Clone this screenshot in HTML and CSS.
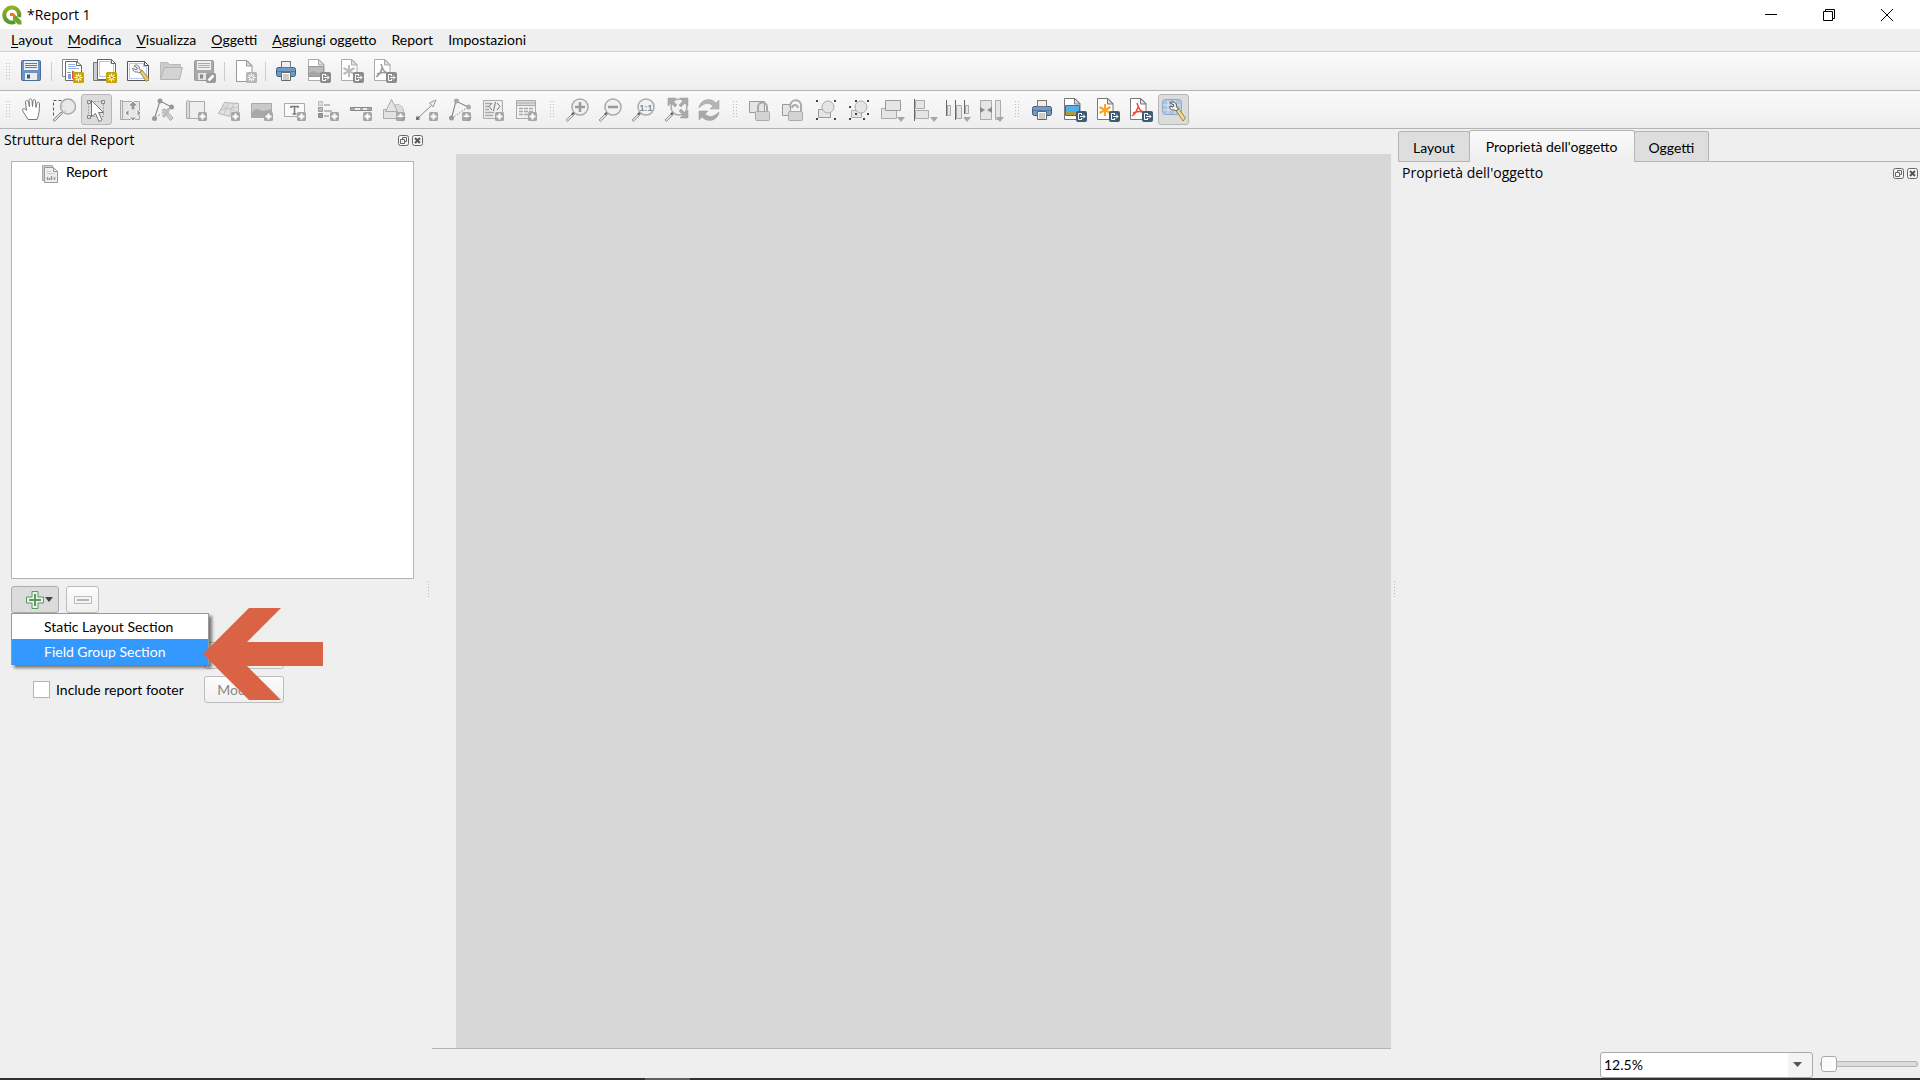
FILE: index.html
```html
<!DOCTYPE html>
<html lang="it">

<head>
    <meta charset="UTF-8">
    <meta name="viewport" content="width=device-width, initial-scale=1.0">
    <title>*Report 1</title>
    <link rel="stylesheet" href="styles.css">
</head>

<body>
    <!-- shared icon parts -->
    <svg class="sprite" aria-hidden="true">
        <defs>
            <linearGradient id="qg" x1="0" y1="0" x2="0" y2="1">
                <stop offset="0" stop-color="#93b023" />
                <stop offset="1" stop-color="#589632" />
            </linearGradient>
            <symbol id="b-new" viewBox="0 0 11 11">
                <rect width="11" height="11" rx="1.5" fill="#c8a300" />
                <path d="M5.5 1.5v8M1.5 5.5h8M2.7 2.7l5.6 5.6M8.3 2.7L2.7 8.3" stroke="#fff" stroke-width="1.2" />
                <circle cx="5.5" cy="5.5" r="1.3" fill="#c8a300" />
            </symbol>
            <symbol id="b-newgrey" viewBox="0 0 11 11">
                <rect width="11" height="11" rx="1.5" fill="#b4b4b4" />
                <path d="M5.5 1.5v8M1.5 5.5h8M2.7 2.7l5.6 5.6M8.3 2.7L2.7 8.3" stroke="#fff" stroke-width="1.2" />
                <circle cx="5.5" cy="5.5" r="1.3" fill="#b4b4b4" />
            </symbol>
            <symbol id="b-plus" viewBox="0 0 9 9">
                <rect width="9" height="9" rx="1.5" fill="#a6a6a6" />
                <path d="M4.5 1.5v6M1.5 4.5h6" stroke="#fff" stroke-width="2" />
            </symbol>
            <symbol id="b-export" viewBox="0 0 11 11">
                <rect width="11" height="11" rx="2" fill="currentColor" />
                <path d="M5 2.5H2.5v6H5M4 5.5h5M7 3.5l2 2-2 2M5.5 2v2M5.5 7v2" fill="none" stroke="#fff" />
            </symbol>
            <symbol id="lens" viewBox="0 0 24 24">
                <path d="M8 15l-7 7 1.5 1.5 7-7z" fill="#ddd" stroke="#999" />
                <path d="M7 16.500l2.500-2.500" stroke="#555" stroke-width="2" />
                <circle cx="15" cy="9" r="8" fill="#f2f2f2" stroke="#aaa" stroke-width="1.500" />
            </symbol>
            <symbol id="page" viewBox="0 0 24 24">
                <path d="M1.500.500H12l5 5v16H1.500z" fill="#fff" stroke="currentColor" />
                <path d="M11.500.500v5.500H17z" fill="#ddd" stroke="currentColor" />
            </symbol>
            <symbol id="printer" viewBox="0 0 24 24">
                <rect x="2.500" y="8.500" width="19" height="9" rx="2" fill="#6f9bcb" stroke="#415a75" />
                <path d="M3 12.500h18" stroke="#4c77a7" />
                <rect x="7.500" y="2.500" width="9" height="6" fill="#eee" stroke="#777" />
                <path d="M7.500 13.500h9v8h-9z" fill="#fff" stroke="#666" />
                <path d="M9 16h6M9 18h6M9 20h6" stroke="#999" />
            </symbol>
            <symbol id="float" viewBox="0 0 11 11">
                <rect x=".5" y=".5" width="10" height="10" rx="2" fill="#f7f7f7" stroke="#666" />
                <path d="M4.500 5V2.500h4v4H6.500M2.500 4.500h4v4h-4z" fill="none" stroke="#666" />
            </symbol>
            <symbol id="close" viewBox="0 0 11 11">
                <rect x=".5" y=".5" width="10" height="10" rx="2" fill="#f7f7f7" stroke="#666" />
                <path d="M3 3l5 5M8 3L3 8" stroke="#555" stroke-width="2" />
            </symbol>
            <symbol id="down" viewBox="0 0 8 5">
                <path d="M0 0h8L4 5z" fill="#a6a6a6" />
            </symbol>
        </defs>
    </svg>

    <header class="titlebar">
        <svg class="logo" viewBox="0 0 20 20">
            <path d="M10 2.500a7.500 7.500 0 1 0 3 14.300" fill="none" stroke="url(#qg)" stroke-width="4" />
            <path d="M10 2.500a7.500 7.500 0 0 1 7 9.500" fill="none" stroke="url(#qg)" stroke-width="4" />
            <path d="M11 11h3.500l5 5v3.500H16l-5-5z" fill="#6fa52c" />
            <path d="M8 8h3.500l2.500 2.500-1.500 1.500-1.500-1H8z" fill="#ee7913" />
        </svg>
        <h1>*Report 1</h1>
        <div class="window-buttons">
            <button type="button" aria-label="Riduci a icona"><svg viewBox="0 0 12 12"><path d="M0 5.500h12" stroke="#000" /></svg></button>
            <button type="button" aria-label="Ripristina"><svg viewBox="0 0 12 12"><path d="M.5 2.500h9v9h-9zM2.500 2.500v-2h9v9h-2" fill="none" stroke="#000" /></svg></button>
            <button type="button" aria-label="Chiudi"><svg viewBox="0 0 12 12"><path d="M0 0l12 12M12 0L0 12" stroke="#000" /></svg></button>
        </div>
    </header>

    <nav class="menubar">
        <button type="button"><u>L</u>ayout</button>
        <button type="button"><u>M</u>odifica</button>
        <button type="button"><u>V</u>isualizza</button>
        <button type="button"><u>O</u>ggetti</button>
        <button type="button"><u>A</u>ggiungi oggetto</button>
        <button type="button">Report</button>
        <button type="button">Impostazioni</button>
    </nav>

    <div class="toolbar" role="toolbar" aria-label="Report">
        <span class="grip"></span>
        <button type="button" aria-label="Salva progetto"><svg viewBox="0 0 24 24">
            <rect x="2.500" y="1.500" width="19" height="20" rx="1" fill="#6a94c4" stroke="#4c6c92" />
            <rect x="5" y="2" width="14" height="9" fill="#eee" /><path d="M6 4.500h12M6 6.500h12M6 8.500h12" stroke="#777" />
            <path d="M6 14h12v7H6z" fill="#ececec" /><path d="M8 15.500h3v4H8z" fill="#3d5878" /></svg></button>
        <span class="separator"></span>
        <button type="button" aria-label="Nuovo report"><svg viewBox="0 0 24 24">
            <path d="M2.500.500h15v17h-15z" fill="#fff" stroke="#888" />
            <path d="M5.500 2.500h11l5 4v15h-16z" fill="#fff" stroke="#666" /><path d="M16.500 2.500v4h5" fill="none" stroke="#666" />
            <path d="M8 5.500h7M8 7.500h8M8 9.500h11" stroke="#9bb2dd" />
            <path d="M8 15h3v5H8z" fill="#7da0d8" /><path d="M12 12h2v8h-2z" fill="#d9534f" /><path d="M7 13.500h4" stroke="#999" />
            <use href="#b-new" x="13" y="13" width="11" height="11" /></svg></button>
        <button type="button" aria-label="Duplica report"><svg viewBox="0 0 24 24">
            <path d="M.5 3.500h16v18H.5z" fill="#ccc" stroke="#777" />
            <path d="M4.500.500h14l4 4v16h-18z" fill="#fff" stroke="#666" /><path d="M6.500 2.500h11v2h3v13h-14z" fill="none" stroke="#b7c7f1" />
            <path d="M18.500.500v4h4" fill="none" stroke="#666" />
            <use href="#b-new" x="13" y="13" width="11" height="11" /></svg></button>
        <button type="button" aria-label="Gestione layout"><svg viewBox="0 0 24 24">
            <path d="M1.500 2.500h17l4 4v15h-21z" fill="#fff" stroke="#555" /><path d="M3.500 4.500h14v3h3v12h-17z" fill="none" stroke="#b7c7f1" />
            <path d="M18.500 2.500v4h4" fill="none" stroke="#555" />
            <path d="M13 12l3-1 7 9-2.500 2.500z" fill="#e6cf72" stroke="#a28b35" />
            <path d="M8 7c2-2 5-1 5.500 2 0 1 .5 2 2 3l-2.500 2c-1-1-2-1-3-1-2 0-4-2-3-4l3 2 1.500-2z" fill="#eee" stroke="#777" /></svg></button>
        <button type="button" aria-label="Aggiungi elementi da modello" disabled><svg viewBox="0 0 24 24">
            <path d="M1.500 19.500v-16h7l2 2h11v3" fill="#ccc" stroke="#bbb" />
            <path d="M5.500 8.500h18l-3 12h-19z" fill="#d3d3d3" stroke="#b5b5b5" /></svg></button>
        <button type="button" aria-label="Salva come modello" disabled><svg viewBox="0 0 24 24">
            <rect x="2.500" y="1.500" width="19" height="20" rx="1" fill="#a9a9a9" stroke="#999" />
            <rect x="5" y="2" width="14" height="9" fill="#efefef" /><path d="M6 4.500h12M6 6.500h12M6 8.500h12" stroke="#aaa" />
            <path d="M6 14h9v7H6z" fill="#e4e4e4" /><path d="M8 15.500h3v4H8z" fill="#888" />
            <rect x="14" y="14" width="10" height="10" rx="2" fill="#999" /><path d="M16.500 21.500l5-5" stroke="#fff" stroke-width="2.500" /></svg></button>
        <span class="separator"></span>
        <button type="button" aria-label="Aggiungi pagine" disabled><svg viewBox="0 0 24 24" color="#999">
            <use href="#page" x="2" y="1" width="24" height="24" /><use href="#b-newgrey" x="13" y="13" width="11" height="11" /></svg></button>
        <span class="separator"></span>
        <button type="button" aria-label="Stampa report"><svg viewBox="0 0 24 24"><use href="#printer" /></svg></button>
        <button type="button" aria-label="Esporta come immagine" disabled><svg viewBox="0 0 24 24" color="#aaa">
            <use href="#page" /><path d="M1.500 7.500h15v10h-15z" fill="#bbb" stroke="#999" /><path d="M2 14l4-2 5 2 5-1v4H2z" fill="#a5a5a5" />
            <use href="#b-export" x="13" y="13" width="11" height="11" color="#8b8b8b" /></svg></button>
        <button type="button" aria-label="Esporta come SVG" disabled><svg viewBox="0 0 24 24" color="#aaa">
            <use href="#page" /><path d="M9 6v12M3.500 9l11 6M14.500 9l-11 6" stroke="#bbb" stroke-width="2" />
            <use href="#b-export" x="13" y="13" width="11" height="11" color="#8b8b8b" /></svg></button>
        <button type="button" aria-label="Esporta come PDF" disabled><svg viewBox="0 0 24 24" color="#aaa">
            <use href="#page" /><path d="M8 5c2 6 3 8 7 9M9 9c-1 4-3 7-6 9M4 15c4-2 7-2 10-1" fill="none" stroke="#999" stroke-width="1.500" />
            <use href="#b-export" x="13" y="13" width="11" height="11" color="#8b8b8b" /></svg></button>
    </div>

    <div class="toolbar toolbar-items" role="toolbar" aria-label="Strumenti">
        <span class="grip"></span>
        <button type="button" aria-label="Sposta layout"><svg viewBox="0 0 24 24">
            <path d="M9 21.500C7 18 4 14 3.500 12c0-2 2-2 4 .5L6.500 4c0-2 2.500-2 3 0l1 5-.5-6.500c0-2 2.500-2 3 0l.5 6 .5-5.500c0-2 2.500-2 2.500 0l.5 6.500 1-4c.5-1.500 2.500-1.500 2.500 0 0 7-.5 11-2.500 16z" fill="#fff" stroke="#777" /></svg></button>
        <button type="button" aria-label="Zoom"><svg viewBox="0 0 24 24">
            <path d="M1.500 17.500v-15h15" fill="none" stroke="#555" stroke-dasharray="3 2" />
            <path d="M9 14l-8 8 1.500 1.500 8-8z" fill="#ddd" stroke="#888" /><circle cx="16" cy="8.500" r="7.500" fill="#e9e9e9" stroke="#aaa" stroke-width="1.500" />
            <path d="M10 3v10h6" stroke="#bbb" fill="none" stroke-dasharray="2 2" /></svg></button>
        <button type="button" class="checked" aria-pressed="true" aria-label="Seleziona oggetto"><svg viewBox="0 0 24 24">
            <path d="M3.500 3.500h15v15h-15z" fill="none" stroke="#777" stroke-dasharray="1 2" />
            <path d="M2.500 2.500h3v3h-3zM16.500 2.500h3v3h-3zM2.500 17.500h3v3h-3z" fill="#ddd" stroke="#888" />
            <path d="M6.500 2.500v16l4-3 3.500 8 3-1.500-3.500-7.500h5z" fill="#fff" stroke="#777" /></svg></button>
        <button type="button" aria-label="Sposta contenuto" disabled><svg viewBox="0 0 24 24">
            <path d="M4.500 3.500h17v18h-17zM2.500 2.500h2v19h-2z" fill="#e6e6e6" stroke="#aaa" />
            <path d="M15 3l5 5h-3v4h-4V8h-3zM7 15l4-4v8zM23 15l-4-4v8zM15 23l-4-4h8z" fill="#999" stroke="#f3f3f3" /></svg></button>
        <button type="button" aria-label="Modifica nodi" disabled><svg viewBox="0 0 24 24">
            <path d="M3.500 20.500L9 3l11.500 6" fill="none" stroke="#777" />
            <path d="M4 20L20 9" stroke="#888" stroke-dasharray="2 2" />
            <circle cx="9" cy="3" r="2.500" fill="#999" /><circle cx="20.500" cy="9" r="2.500" fill="#999" /><circle cx="3.500" cy="20.500" r="2.500" fill="#999" />
            <path d="M11 12l3-1 8 9-2.500 2.500z" fill="#ccc" stroke="#aaa" /><path d="M18 11l-6 8" stroke="#bbb" stroke-width="3" /></svg></button>
        <button type="button" aria-label="Aggiungi mappa" disabled><svg viewBox="0 0 24 24">
            <path d="M5.500 3.500h15v17h-15z" fill="#eee" stroke="#aaa" /><path d="M2.500 4c0-2 3-2 3 0v16.500h-3z" fill="#ddd" stroke="#aaa" />
            <use href="#b-plus" x="14" y="14" width="9" height="9" /></svg></button>
        <button type="button" aria-label="Aggiungi mappa 3D" disabled><svg viewBox="0 0 24 24">
            <path d="M7.500 4.500l14 1v9l-8 4-12-3z" fill="#e1e1e1" stroke="#b5b5b5" />
            <path d="M3 12l18-3M5 8l16 6M12 5l-5 11M17 5l-5 13" fill="none" stroke="#c2c2c2" />
            <use href="#b-plus" x="14" y="14" width="9" height="9" /></svg></button>
        <button type="button" aria-label="Aggiungi immagine" disabled><svg viewBox="0 0 24 24">
            <path d="M1.500 5.500h20v14h-20z" fill="#c9c9c9" stroke="#aaa" /><path d="M2 14c3-4 6-3 8-2s6 1 11-1v8H2z" fill="#a9a9a9" />
            <use href="#b-plus" x="14" y="14" width="9" height="9" /></svg></button>
        <button type="button" aria-label="Aggiungi etichetta" disabled><svg viewBox="0 0 24 24">
            <path d="M1.500 5.500h20v13h-20z" fill="#fafafa" stroke="#aaa" /><path d="M8 10V8.500h7V10M11.500 8.500v8M9.500 16h4" fill="none" stroke="#777" stroke-width="1.500" />
            <use href="#b-plus" x="14" y="14" width="9" height="9" /></svg></button>
        <button type="button" aria-label="Aggiungi legenda" disabled><svg viewBox="0 0 24 24">
            <path d="M2.500 3.500h4v4h-4z" fill="#ddd" stroke="#bbb" /><path d="M2.500 9.500h4v4h-4z" fill="#bbb" stroke="#999" /><path d="M2.500 15.500h4v4h-4z" fill="#999" stroke="#888" />
            <path d="M8 7h6M8 13h8M8 18h5" stroke="#bbb" stroke-width="2" />
            <use href="#b-plus" x="14" y="14" width="9" height="9" /></svg></button>
        <button type="button" aria-label="Aggiungi barra di scala" disabled><svg viewBox="0 0 24 24">
            <path d="M1.500 9.500h21v3h-21z" fill="#eee" stroke="#888" /><path d="M2 11h4M11 11h3M18 11h4" stroke="#aaa" stroke-width="2" />
            <use href="#b-plus" x="14" y="14" width="9" height="9" /></svg></button>
        <button type="button" aria-label="Aggiungi forma" disabled><svg viewBox="0 0 24 24">
            <circle cx="15" cy="13" r="6.500" fill="#ddd" stroke="#bbb" /><path d="M1.500 11.500h13v9h-13z" fill="#e3e3e3" stroke="#aaa" />
            <path d="M9.500 1.500l6 12h-12z" fill="#e3e3e3" stroke="#aaa" />
            <use href="#b-plus" x="14" y="14" width="9" height="9" /><path d="M15 19h9l-4.500 4.500z" fill="#999" opacity=".7" /></svg></button>
        <button type="button" aria-label="Aggiungi freccia" disabled><svg viewBox="0 0 24 24">
            <path d="M3 20L18 6" stroke="#888" /><path d="M21 2l-6.500 3 3.500 4z" fill="#eee" stroke="#999" /><path d="M1 18.500h3.500V22H1z" fill="#777" />
            <use href="#b-plus" x="14" y="14" width="9" height="9" /></svg></button>
        <button type="button" aria-label="Aggiungi nodi" disabled><svg viewBox="0 0 24 24">
            <path d="M3.500 20L8 3l12 6" fill="none" stroke="#777" /><path d="M4 20L20 9" stroke="#555" stroke-dasharray="1 2" />
            <circle cx="8.500" cy="3" r="2.500" fill="#aaa" /><circle cx="20.500" cy="9" r="2.500" fill="#aaa" /><circle cx="3.500" cy="20" r="2.500" fill="#999" />
            <use href="#b-plus" x="14" y="14" width="9" height="9" /><path d="M15 19h9l-4.500 4.500z" fill="#999" opacity=".7" /></svg></button>
        <button type="button" aria-label="Aggiungi HTML" disabled><svg viewBox="0 0 24 24">
            <path d="M2.500 2.500h19v18h-19z" fill="#eee" stroke="#aaa" /><path d="M4 5.500h6M4 8.500h4M4 11.500h4M4 14.500h9M4 17.500h8" stroke="#aaa" stroke-width="1.500" />
            <path d="M11 5l-3 3.500 3 3.500M16 5l3 3.500-3 3.500M14.500 4l-2 9" fill="none" stroke="#777" />
            <use href="#b-plus" x="14" y="14" width="9" height="9" /></svg></button>
        <button type="button" aria-label="Aggiungi tabella" disabled><svg viewBox="0 0 24 24">
            <path d="M2.500 2.500h19v18h-19z" fill="#f1f1f1" stroke="#aaa" /><path d="M3 5h18" stroke="#c4c4c4" stroke-width="3" /><path d="M3 7.500h18" stroke="#aaa" />
            <path d="M5 10.500h14M5 13.500h14M5 16.500h14" stroke="#aaa" stroke-width="1.500" stroke-dasharray="4 1" />
            <use href="#b-plus" x="14" y="14" width="9" height="9" /></svg></button>
        <span class="grip grip-middle"></span>
        <button type="button" aria-label="Ingrandisci"><svg viewBox="0 0 24 24"><use href="#lens" /><path d="M15 4v10M10 9h10" stroke="#999" stroke-width="2.500" /></svg></button>
        <button type="button" aria-label="Rimpicciolisci"><svg viewBox="0 0 24 24"><use href="#lens" /><path d="M10 9h10" stroke="#999" stroke-width="2.500" /></svg></button>
        <button type="button" aria-label="Zoom al 100%"><svg viewBox="0 0 24 24"><use href="#lens" />
            <text class="ratio" x="15" y="13">1:1</text></svg></button>
        <button type="button" aria-label="Zoom completo"><svg viewBox="0 0 24 24"><use href="#lens" />
            <path d="M4 0h8l-3 3 4 4-2 2-4-4-3 3zM24 0h-8l3 3-4 4 2 2 4-4 3 3zM24 20h-8l3-3-4-4 2-2 4 4 3-3z" fill="#aaa" stroke="#999" stroke-width=".5" /></svg></button>
        <button type="button" aria-label="Aggiorna vista"><svg viewBox="0 0 24 24">
            <path d="M2 10C3 1 14-1 19 5l3-3v9h-9l3-3C12 4 7 5 2 10z" fill="#b5b5b5" stroke="#999" stroke-width=".5" />
            <path d="M22 14c-1 9-12 11-17 5l-3 3v-9h9l-3 3c4 4 9 3 14-2z" fill="#a8a8a8" stroke="#999" stroke-width=".5" /></svg></button>
        <span class="grip grip-middle"></span>
        <button type="button" aria-label="Blocca oggetti" disabled><svg viewBox="0 0 24 24">
            <path d="M1.500 3.500h15v11h-15z" fill="#e5e5e5" stroke="#999" /><path d="M10 14V9c0-6 9-6 9 0v5" fill="none" stroke="#aaa" stroke-width="2" />
            <rect x="7.500" y="13.500" width="14" height="9" rx="1" fill="#d3d3d3" stroke="#aaa" /></svg></button>
        <button type="button" aria-label="Sblocca oggetti" disabled><svg viewBox="0 0 24 24">
            <path d="M1.500 6.500h8v11h-8z" fill="#e5e5e5" stroke="#999" /><path d="M9 9c0-9 12-9 11 0v5M11 10c1-4 5-4 6 0" fill="none" stroke="#aaa" stroke-width="2" />
            <rect x="7.500" y="13.500" width="14" height="9" rx="1" fill="#d3d3d3" stroke="#aaa" /></svg></button>
        <button type="button" aria-label="Raggruppa" disabled><svg viewBox="0 0 24 24">
            <path d="M4.500 11.500h12v8h-12z" fill="#e5e5e5" stroke="#999" /><circle cx="14" cy="9" r="6" fill="#e5e5e5" stroke="#aaa" />
            <path d="M2 2h2v2H2zM20 2h2v2h-2zM2 20h2v2H2zM20 20h2v2h-2z" fill="#444" /></svg></button>
        <button type="button" aria-label="Separa" disabled><svg viewBox="0 0 24 24">
            <path d="M4.500 12.500h10v7h-10z" fill="#e5e5e5" stroke="#aaa" /><circle cx="14" cy="9" r="6" fill="#e5e5e5" stroke="#aaa" />
            <path d="M8 2h2v2H8zM20 2h2v2h-2zM2 8h2v2H2zM2 20h2v2H2zM16 20h2v2h-2zM20 15h2v2h-2zM8 15h2v2H8z" fill="#444" /></svg></button>
        <button type="button" aria-label="Porta in alto" disabled><svg viewBox="0 0 24 24">
            <path d="M1.500 10.500h15v10h-15z" fill="#e5e5e5" stroke="#aaa" /><path d="M5.500 2.500h15v10h-15z" fill="#e5e5e5" stroke="#999" />
            <use href="#down" x="17" y="19" width="8" height="5" /></svg></button>
        <button type="button" aria-label="Allinea a sinistra" disabled><svg viewBox="0 0 24 24">
            <path d="M1.500 1v22" stroke="#666" /><path d="M2.500 2.500h9v8h-9zM2.500 12.500h13v8h-13z" fill="#e5e5e5" stroke="#aaa" />
            <use href="#down" x="17" y="19" width="8" height="5" /></svg></button>
        <button type="button" aria-label="Distribuisci a sinistra" disabled><svg viewBox="0 0 24 24">
            <path d="M.5 2v16M9.500 2v20M18.500 2v14" stroke="#666" /><path d="M1.500 7.500h3v10h-3zM10.500 7.500h5v13h-5zM19.500 7.500h3v8h-3z" fill="#e5e5e5" stroke="#aaa" />
            <use href="#down" x="17" y="19" width="8" height="5" /></svg></button>
        <button type="button" aria-label="Ridimensiona" disabled><svg viewBox="0 0 24 24">
            <path d="M1.500 2.500h11v19h-11zM16.500 2.500h5v19h-5z" fill="#e5e5e5" stroke="#aaa" /><path d="M1 9l5 3-5 3zM13 9l-5 3 5 3z" fill="#888" />
            <use href="#down" x="17" y="19" width="8" height="5" /></svg></button>
        <span class="grip grip-middle"></span>
        <button type="button" aria-label="Stampa layout"><svg viewBox="0 0 24 24"><use href="#printer" /></svg></button>
        <button type="button" aria-label="Esporta layout come immagine"><svg viewBox="0 0 24 24" color="#777">
            <use href="#page" /><path d="M2.500 7.500h14v10h-14z" fill="#50aee8" stroke="#3e7196" /><path d="M3 14l4-1 5 1 4-1v4H3z" fill="#b29b3d" />
            <use href="#b-export" x="13" y="13" width="11" height="11" color="#3e5b73" /></svg></button>
        <button type="button" aria-label="Esporta layout come SVG"><svg viewBox="0 0 24 24" color="#777">
            <use href="#page" /><path d="M9 6v12M3.500 9l11 6M14.500 9l-11 6" stroke="#ffa321" stroke-width="2" />
            <use href="#b-export" x="13" y="13" width="11" height="11" color="#3e5b73" /></svg></button>
        <button type="button" aria-label="Esporta layout come PDF"><svg viewBox="0 0 24 24" color="#777">
            <use href="#page" /><path d="M8 5c2 6 3 8 7 9M9 9c-1 4-3 7-6 9M4 15c4-2 7-2 10-1" fill="none" stroke="#ed4a3c" stroke-width="1.500" />
            <use href="#b-export" x="13" y="13" width="11" height="11" color="#3e5b73" /></svg></button>
        <button type="button" class="checked" aria-pressed="true" aria-label="Impostazioni atlante"><svg viewBox="0 0 24 24">
            <rect x=".5" y="1.500" width="19" height="15" rx="3" fill="#adc3e2" stroke="#8ea8cb" /><path d="M6 2v14M1 7h18M13 2v14M1 12h18" stroke="#dce8f6" />
            <path d="M13 11l3-1 7.500 10-2.500 3z" fill="#edd889" stroke="#9d8841" />
            <path d="M8 5c2-2 6-1 6.500 2 0 2 .5 3 2 4l-2.500 2c-1-1-2-1-3-1-2 0-4-2-3-4l3 1 1-2z" fill="#eee" stroke="#555" /></svg></button>
    </div>

    <main class="workspace">
        <section class="dock dock-left">
            <div class="dock-title">
                <h2>Struttura del Report</h2>
                <button type="button" aria-label="Sgancia pannello"><svg viewBox="0 0 11 11"><use href="#float" /></svg></button>
                <button type="button" aria-label="Chiudi pannello"><svg viewBox="0 0 11 11"><use href="#close" /></svg></button>
            </div>
            <div class="report-tree" role="tree">
                <div class="tree-item" role="treeitem">
                    <svg viewBox="0 0 18 18">
                        <path d="M1.500.500h10v2H3.500v13h-2z" fill="#ccc" stroke="#aaa" />
                        <path d="M3.500 2.500h9l4 4v11h-13z" fill="#eee" stroke="#999" /><path d="M12.500 2.500v4h4" fill="none" stroke="#999" />
                        <path d="M6 6.500h4M6 8.500h8" stroke="#ccc" /><path d="M6.500 12v3M8.500 13v2M10.500 11v4M13.500 12v3" stroke="#999" stroke-width="1.500" />
                    </svg>
                    Report
                </div>
            </div>
            <div class="tree-buttons">
                <button type="button" class="btn btn-add" aria-haspopup="true" aria-expanded="true" aria-label="Aggiungi sezione">
                    <svg class="icon-add" viewBox="0 0 18 18"><path d="M6 .5h6v5.500h5.500v6H12v5.500H6V12H.5V6H6z" fill="#e7f1e7" stroke="#5b9b5d" /><path d="M9 3v12M3 9h12" stroke="#5b9b5d" stroke-width="2" /></svg>
                    <svg class="icon-down" viewBox="0 0 8 5"><path d="M0 0h8L4 5z" fill="#444" /></svg>
                </button>
                <button type="button" class="btn btn-remove" disabled aria-label="Rimuovi sezione">
                    <svg class="icon-remove" viewBox="0 0 18 8"><path d="M.5.500h17v7H.5z" fill="#f5f5f5" stroke="#bbb" /><path d="M3 4h12" stroke="#b5b5b5" stroke-width="2" /></svg>
                </button>
                <div class="popup" role="menu">
                    <button type="button" role="menuitem">Static Layout Section</button>
                    <button type="button" role="menuitem" class="active">Field Group Section</button>
                </div>
                <svg class="pointer" viewBox="0 0 120 92"><path d="M0 46L46 0h32L44 34h76v24H44l34 34H46z" fill="#d96344" /></svg>
            </div>
            <div class="report-options">
                <div class="option">
                    <input type="checkbox" id="header" aria-label="Include report header">
                    <button type="button" class="btn btn-edit" disabled aria-label="Modifica"></button>
                </div>
                <div class="option">
                    <input type="checkbox" id="footer"><label for="footer">Include report footer</label>
                    <button type="button" class="btn btn-edit" disabled>Modifica</button>
                </div>
            </div>
        </section>
        <div class="splitter"></div>
        <section class="view"><div class="canvas"></div></section>
        <div class="splitter"></div>
        <section class="dock dock-right">
            <div class="tabs" role="tablist">
                <button type="button" role="tab">Layout</button>
                <button type="button" role="tab" class="active" aria-selected="true">Proprietà dell'oggetto</button>
                <button type="button" role="tab">Oggetti</button>
            </div>
            <div class="dock-title">
                <h2>Proprietà dell'oggetto</h2>
                <button type="button" aria-label="Sgancia pannello"><svg viewBox="0 0 11 11"><use href="#float" /></svg></button>
                <button type="button" aria-label="Chiudi pannello"><svg viewBox="0 0 11 11"><use href="#close" /></svg></button>
            </div>
        </section>
    </main>

    <footer class="statusbar">
        <div class="zoom-level">
            <select aria-label="Livello di zoom">
                <option>12.5%</option>
                <option>25%</option>
                <option>50%</option>
                <option>100%</option>
            </select>
            <svg viewBox="0 0 9 5"><path d="M0 0h9L4.500 5z" fill="#555" /></svg>
        </div>
        <input type="range" min="0" max="100" value="0" aria-label="Zoom">
    </footer>
    <div class="taskbar"><span></span></div>
</body>

</html>
```
FILE: styles.css
```css
* {
    box-sizing: border-box;
}

body {
    margin: 0;
    height: 100vh;
    display: flex;
    flex-direction: column;
    overflow: hidden;
    background: #efefef;
    color: #000;
    font-family: Lato, "Open Sans", sans-serif;
    font-size: 14px;
    line-height: 20px;
}

button,
select {
    font: inherit;
    color: inherit;
    margin: 0;
    padding: 0;
    border: none;
    background: none;
}

svg {
    display: block;
    overflow: visible;
}

.sprite {
    position: absolute;
    width: 0;
    height: 0;
}

/* title bar */
.titlebar {
    display: flex;
    align-items: center;
    gap: 5px;
    height: 29px;
    padding-left: 2px;
    background: #fff;
}

.logo {
    width: 20px;
    height: 20px;
}

h1,
h2 {
    margin: 0;
    font-family: "Open Sans", sans-serif;
    font-size: 14px;
    font-weight: normal;
}

.window-buttons {
    display: flex;
    margin-left: auto;
    padding-right: 4px;
}

.window-buttons button {
    width: 58px;
    height: 28px;
    display: flex;
    align-items: center;
    justify-content: center;
}

.window-buttons svg {
    width: 12px;
    height: 12px;
}

/* menu */
.menubar {
    display: flex;
    gap: 15px;
    height: 23px;
    padding-left: 11px;
    border-bottom: 1px solid #d0d0d0;
}

u {
    text-underline-offset: 2px;
}

/* toolbars */
.toolbar {
    display: flex;
    align-items: center;
    gap: 2px;
    height: 39px;
    padding-left: 6px;
    border-bottom: 1px solid #b4b4b4;
    background: linear-gradient(#fafafa, #eee);
}

.toolbar-items {
    height: 38px;
}

.toolbar button {
    flex: none;
    display: flex;
    align-items: center;
    justify-content: center;
    width: 31px;
    height: 31px;
    border: 1px solid transparent;
    border-radius: 3px;
}

.toolbar button.checked {
    background: #dcdcdc;
    border-color: #b6b6b6;
}

.toolbar svg {
    flex: none;
    width: 24px;
    height: 24px;
}

.ratio {
    font: bold 9px "Liberation Sans", sans-serif;
    fill: #888;
    text-anchor: middle;
}

/* two columns of dots */
.grip {
    width: 7px;
    height: 17px;
    background:
        linear-gradient(#bbb 1px, transparent 1px) 0 0 / 1px 3px repeat-y,
        linear-gradient(#bbb 1px, transparent 1px) 3px 0 / 1px 3px repeat-y;
}

.grip-middle {
    width: 16px;
    background-position: 7px 0, 10px 0;
}

.separator {
    width: 6px;
    height: 19px;
    background: linear-gradient(#ccc, #ccc) center / 1px 100% no-repeat;
}

/* docks */
.workspace {
    flex: 1;
    display: flex;
    min-height: 0;
}

.dock-left {
    width: 425px;
    padding: 0 11px;
}

.dock-title {
    display: flex;
    align-items: center;
    gap: 3px;
    height: 22px;
}

.dock-title h2 {
    margin-right: auto;
}

.dock-title svg {
    width: 11px;
    height: 11px;
}

.dock-left .dock-title {
    margin: 0 -9px 10px -7px;
}

.report-tree {
    height: 418px;
    padding: 0 29px;
    border: 1px solid #b4b4b4;
    background: #fff;
}

.tree-item {
    display: flex;
    gap: 7px;
}

.tree-item svg {
    width: 18px;
    height: 18px;
    margin-top: 3px;
}

.tree-buttons {
    position: relative;
    display: flex;
    gap: 7px;
    padding-top: 7px;
}

.btn {
    height: 27px;
    border: 1px solid #bdbdbd;
    border-radius: 3px;
    background: linear-gradient(#fcfcfc, #f0f0f0);
}

.btn:disabled {
    color: #888;
}

.btn-add {
    display: flex;
    align-items: center;
    justify-content: flex-end;
    gap: 1px;
    width: 48px;
    padding-right: 5px;
    background: #dcdcdc;
    border-color: #acacac;
}

.icon-add {
    width: 18px;
    height: 18px;
}

.icon-down {
    width: 8px;
    height: 5px;
}

.btn-remove {
    width: 33px;
}

.icon-remove {
    width: 18px;
    height: 8px;
    margin: 0 auto;
}

.popup {
    position: absolute;
    z-index: 1;
    top: 34px;
    left: 0;
    width: 198px;
    border: 1px solid #999;
    border-bottom-color: #3399ff;
    background: #fff;
    box-shadow: 3px 3px 3px rgba(0, 0, 0, 0.5);
}

.popup button {
    display: block;
    width: 100%;
    height: 25px;
    padding-left: 32px;
    text-align: left;
}

.popup .active {
    background: #3399ff;
    color: #fff;
}

.pointer {
    position: absolute;
    z-index: 2;
    top: 29px;
    left: 192px;
    width: 120px;
    height: 92px;
}

.report-options {
    display: flex;
    flex-direction: column;
    gap: 7px;
    width: 273px;
    padding: 29px 0 0 22px;
}

.option {
    display: flex;
    align-items: center;
    gap: 6px;
}

.option input {
    appearance: none;
    width: 17px;
    height: 17px;
    margin: 0;
    border: 1px solid #b4b4b4;
    background: #fff;
}

.btn-edit {
    width: 80px;
    margin-left: auto;
}

.splitter {
    width: 7px;
    background: repeating-linear-gradient(#bbb 0 1px, transparent 1px 3px) center / 1px 17px no-repeat;
}

.view {
    flex: 1;
    padding: 25px 0 0 24px;
    border-bottom: 1px solid #b4b4b4;
}

.canvas {
    height: 100%;
    background: #d7d7d7;
}

.dock-right {
    width: 522px;
}

.tabs {
    display: flex;
    align-items: flex-end;
    height: 33px;
    border-bottom: 1px solid #b4b4b4;
}

.tabs button {
    height: 30px;
    padding: 2px 14px 0;
    border: 1px solid #b4b4b4;
    border-bottom: none;
    border-radius: 3px 3px 0 0;
    background: #dedede;
}

.tabs .active {
    height: 32px;
    margin: 0 -1px -1px;
    padding: 0 16px;
    background: linear-gradient(#fafafa, #efefef);
}

.dock-right .dock-title {
    padding: 0 2px 0 4px;
}

/* status bar */
.statusbar {
    display: flex;
    justify-content: flex-end;
    gap: 7px;
    height: 29px;
    padding: 3px 2px 0 0;
}

.zoom-level {
    position: relative;
    width: 213px;
}

.zoom-level select {
    appearance: none;
    width: 100%;
    height: 26px;
    padding-left: 3px;
    border: 1px solid #aaa;
    border-radius: 3px;
    background: linear-gradient(90deg, #fff 187px, #f3f3f3 187px);
}

.zoom-level svg {
    position: absolute;
    top: 10px;
    right: 11px;
    width: 9px;
    height: 5px;
    pointer-events: none;
}

input[type="range"] {
    appearance: none;
    width: 98px;
    height: 24px;
    margin: 0;
    background: none;
}

input[type="range"]::-webkit-slider-runnable-track {
    height: 6px;
    border: 1px solid #b4b4b4;
    border-radius: 2px;
    background: #dcdcdc;
}

input[type="range"]::-webkit-slider-thumb {
    appearance: none;
    width: 16px;
    height: 16px;
    margin-top: -6px;
    border: 1px solid #aaa;
    border-radius: 3px;
    background: #fbfbfb;
}

.taskbar {
    height: 2px;
    padding-left: 645px;
    background: #303136;
}

.taskbar span {
    display: block;
    width: 45px;
    height: 2px;
    background: #606063;
}
```
